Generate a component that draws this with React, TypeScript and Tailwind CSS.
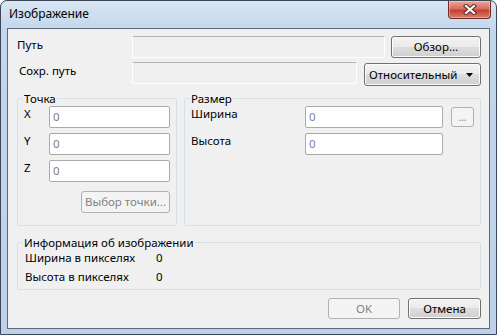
import React from "react";

const face =
  "flex items-center rounded-[3px] border border-[#707070] bg-[linear-gradient(#f2f2f2,#ebebeb_50%,#dddddd_50%,#cfcfcf)] shadow-[inset_0_0_0_1px_#fcfcfc] text-black";
const btn = `${face} justify-center`;
const btnOff =
  "flex items-center justify-center rounded-[3px] border border-[#adb2b5] bg-[#f4f4f4] text-[#838383]";
const box =
  "h-[22px] rounded-[2px] border border-[#ababab] bg-white pl-[3px] leading-[20px]";
const roBox =
  "h-[22px] rounded-[2px] border border-white border-t-[#b2b2b2] bg-[#f0f0f0]";
const group = "rounded-[3px] border border-[#d5dfe5] min-w-0 p-0";
const legend = "ml-[5px] px-[1px] leading-[15px]";

const CloseButton = () => (
  <div className="w-[43px] h-[18px] mr-[5px] rounded-b-[4px] border border-t-0 border-[#6e2a22] bg-[linear-gradient(#eaa99b,#d66e60_45%,#c43f30_55%,#d5806d)] shadow-[inset_0_0_0_1px_rgba(255,255,255,0.35)] flex items-center justify-center">
    <svg width="14" height="11" viewBox="0 0 14 11">
      <path d="M3 2 L11 9 M11 2 L3 9" stroke="#5a2a28" strokeWidth="4.2" strokeLinecap="square" />
      <path d="M3 2 L11 9 M11 2 L3 9" stroke="#ffffff" strokeWidth="2.2" strokeLinecap="square" />
    </svg>
  </div>
);

const PointRow = ({ label, first }: { label: string; first?: boolean }) => (
  <div className={`flex items-start ${first ? "" : "mt-[5px]"}`}>
    <div className="w-[25px] leading-[15px]">{label}</div>
    <div className={`${box} w-[121px] text-[#7d7d7d]`}>0</div>
  </div>
);

export default function App() {
  return (
    <div className="w-[497px] h-[335px] flex flex-col rounded-t-[7px] border border-[#3b4656] bg-[linear-gradient(#d9e5f3,#c2d6ec_30px,#bdd2ea)] text-[11.5px] font-['Noto_Sans',sans-serif] text-black">
      <div className="h-[27px] flex items-start justify-between shrink-0">
        <div className="pl-[8px] pt-[5px] leading-[16px] text-[12px]">Изображение</div>
        <CloseButton />
      </div>

      <div className="flex-1 mx-[6px] mb-[5px] border border-[#5c6b7c] bg-[#f0f0f0] pl-[9px] pr-[8px] pt-[7px] flex flex-col">
        <div className="flex items-start">
          <div className="w-[115px] leading-[15px] pt-[1px]">Путь</div>
          <div className={`${roBox} flex-1`} />
          <button className={`${btn} ml-[6px] w-[90px] h-[22px]`}>Обзор...</button>
        </div>

        <div className="flex items-start mt-[4px]">
          <div className="w-[115px] pl-[2px] leading-[15px] pt-[1px]">Сохр. путь</div>
          <div className={`${roBox} flex-1`} />
          <div className={`${face} justify-between ml-[7px] w-[117px] h-[23px] mt-[1px] pl-[4px] pr-[7px]`}>
            <span className="whitespace-nowrap">Относительный</span>
            <svg width="7" height="4" viewBox="0 0 7 4" className="shrink-0">
              <path d="M0 0 H7 L3.5 4 Z" fill="#000" />
            </svg>
          </div>
        </div>

        <div className="flex mt-[5px] gap-[7px]">
          <fieldset className={`${group} w-[160px] h-[135px]`}>
            <legend className={legend}>Точка</legend>
            <div className="px-[6px]">
              <PointRow label="X" first />
              <PointRow label="Y" />
              <PointRow label="Z" />
              <div className="flex justify-end mt-[9px]">
                <button className={`${btnOff} w-[89px] h-[22px]`}>Выбор точки...</button>
              </div>
            </div>
          </fieldset>

          <fieldset className={`${group} flex-1 h-[135px]`}>
            <legend className={legend}>Размер</legend>
            <div className="px-[6px]">
              <div className="flex items-start">
                <div className="w-[114px] leading-[15px]">Ширина</div>
                <div className={`${box} w-[138px] text-[#7b84a6]`}>0</div>
                <button className={`${btnOff} ml-[8px] mt-[1px] w-[23px] h-[20px] text-[10px] leading-none`}>...</button>
              </div>
              <div className="flex items-start mt-[5px]">
                <div className="w-[114px] leading-[15px]">Высота</div>
                <div className={`${box} w-[138px] text-[#7b84a6]`}>0</div>
              </div>
            </div>
          </fieldset>
        </div>

        <fieldset className={`${group} mt-[9px] h-[55px]`}>
          <legend className={legend}>Информация об изображении</legend>
          <div className="pl-[7px]">
            <div className="flex leading-[15px]">
              <div className="w-[131px]">Ширина в пикселях</div>
              <div>0</div>
            </div>
            <div className="flex leading-[15px] mt-[4px]">
              <div className="w-[131px]">Высота в пикселях</div>
              <div>0</div>
            </div>
          </div>
        </fieldset>

        <div className="flex justify-end gap-[8px] mt-[8px]">
          <button className={`${btnOff} w-[72px] h-[21px]`}>OK</button>
          <button className={`${btn} w-[73px] h-[21px]`}>Отмена</button>
        </div>
      </div>
    </div>
  );
}
